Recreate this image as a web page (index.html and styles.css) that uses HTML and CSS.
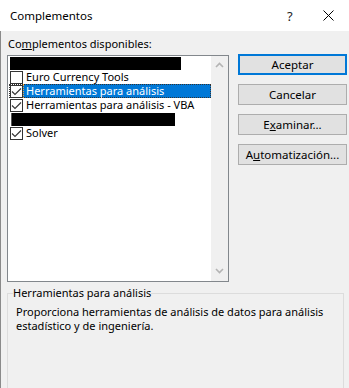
FILE: index.html
```html
<!DOCTYPE html>
<html lang="es">
<head>
    <meta charset="UTF-8">
    <title>Complementos</title>
    <link rel="stylesheet" href="styles.css">
</head>
<body>
    <div class="dialog">
        <div class="titlebar">
            <span class="title">Complementos</span>
            <span class="help">?</span>
            <span class="close">
                <svg width="11" height="11" viewBox="0 0 11 11"><path d="M0.5 0.5 L10.5 10.5 M10.5 0.5 L0.5 10.5" stroke="#000" stroke-width="1" fill="none"/></svg>
            </span>
        </div>

        <div class="content">
            <div class="top">
                <div class="left">
                    <div class="label">Co<u>m</u>plementos disponibles:</div>
                    <div class="listbox">
                        <ul class="items">
                            <li class="row"><span class="redacted bar1"></span></li>
                            <li class="row">
                                <span class="check"></span>
                                <span class="name">Euro Currency Tools</span>
                            </li>
                            <li class="row focus">
                                <span class="check on">
                                    <svg width="11" height="11" viewBox="0 0 11 11"><path d="M1 5.5 L4 8.5 L10 2.5" stroke="#333" stroke-width="1.1" fill="none"/></svg>
                                </span>
                                <span class="name selected">Herramientas para análisis</span>
                            </li>
                            <li class="row">
                                <span class="check on">
                                    <svg width="11" height="11" viewBox="0 0 11 11"><path d="M1 5.5 L4 8.5 L10 2.5" stroke="#333" stroke-width="1.1" fill="none"/></svg>
                                </span>
                                <span class="name">Herramientas para análisis - VBA</span>
                            </li>
                            <li class="row"><span class="redacted bar2"></span></li>
                            <li class="row">
                                <span class="check on">
                                    <svg width="11" height="11" viewBox="0 0 11 11"><path d="M1 5.5 L4 8.5 L10 2.5" stroke="#333" stroke-width="1.1" fill="none"/></svg>
                                </span>
                                <span class="name">Solver</span>
                            </li>
                        </ul>
                        <div class="scrollbar">
                            <svg width="9" height="6" viewBox="0 0 9 6"><path d="M1 5 L4.5 1.5 L8 5" stroke="#b4b4b4" stroke-width="1.6" fill="none"/></svg>
                            <svg width="9" height="6" viewBox="0 0 9 6"><path d="M1 1 L4.5 4.5 L8 1" stroke="#b4b4b4" stroke-width="1.6" fill="none"/></svg>
                        </div>
                    </div>
                </div>

                <div class="buttons">
                    <button class="btn default">Aceptar</button>
                    <button class="btn">Cancelar</button>
                    <button class="btn">E<u>x</u>aminar...</button>
                    <button class="btn">A<u>u</u>tomatización...</button>
                </div>
            </div>

            <fieldset class="group">
                <legend>Herramientas para análisis</legend>
                <p class="desc">Proporciona herramientas de análisis de datos para análisis estadístico y de ingeniería.</p>
            </fieldset>
        </div>
    </div>
</body>
</html>
```

FILE: styles.css
```css
* {
    margin: 0;
    padding: 0;
    box-sizing: border-box;
}

body {
    width: 349px;
    height: 388px;
    overflow: hidden;
    background: #f0f0f0;
    font-family: 'Noto Sans', 'Open Sans', sans-serif;
    font-size: 11px;
    color: #000;
}

.dialog {
    height: 388px;
    display: flex;
    flex-direction: column;
}

/* 标题栏 */
.titlebar {
    flex-shrink: 0;
    height: 31px;
    background: #fff;
    display: flex;
    align-items: center;
}

.title {
    flex: 1;
    padding-left: 10px;
    font-size: 11.5px;
}

.help {
    width: 20px;
    margin-right: 16px;
    font-size: 13px;
    color: #222;
}

.close {
    width: 26px;
    display: flex;
    align-items: center;
}

.content {
    flex: 1;
    min-height: 0;
    overflow: hidden;
    border-left: 1px solid #8a8a8a;
    padding: 6px 0 0 6px;
}

.top {
    display: flex;
}

.label {
    height: 14px;
    line-height: 14px;
    margin-left: 1px;
    margin-bottom: 4px;
}

/* 列表框 */
.listbox {
    width: 222px;
    height: 227px;
    border: 1px solid #82878c;
    background: #fff;
    display: flex;
}

.items {
    list-style: none;
    flex: 1;
}

.row {
    height: 14px;
    display: flex;
    align-items: center;
    padding-left: 2px;
}

.row.focus {
    outline: 1px dotted #333;
    outline-offset: -1px;
    margin-left: 1px;
    padding-left: 1px;
}

.check {
    width: 13px;
    height: 13px;
    border: 1px solid #333;
    background: #fff;
    display: flex;
    align-items: center;
    justify-content: center;
}

.name {
    flex: 1;
    height: 14px;
    line-height: 14px;
    padding-left: 3px;
    white-space: nowrap;
}

.name.selected {
    background: #0078d7;
    color: #fff;
    border: 1px dotted #f2a640;
    line-height: 12px;
    padding-left: 2px;
}

.redacted {
    height: 13px;
    background: #000;
}

.bar1 {
    width: 171px;
}

.bar2 {
    width: 164px;
    margin-left: 1px;
    border-left: 1px solid #555;
}

.scrollbar {
    width: 17px;
    background: #f0f0f0;
    display: flex;
    flex-direction: column;
    justify-content: space-between;
    align-items: center;
    padding: 6px 0 7px;
}

/* 按钮 */
.buttons {
    margin-left: 9px;
    margin-top: 17px;
    width: 109px;
    display: flex;
    flex-direction: column;
    gap: 9px;
}

.btn {
    height: 21px;
    background: #e1e1e1;
    border: 1px solid #adadad;
    font-family: inherit;
    font-size: 11.5px;
    color: #000;
}

.btn.default {
    border: 2px solid #0078d7;
}

/* 说明分组 */
.group {
    margin-top: 4px;
    width: 337px;
    height: 120px;
    border: 1px solid #dcdcdc;
    padding: 0 8px 0 8px;
}

.group legend {
    padding: 0;
    margin-left: -3px;
    line-height: 14px;
}

.desc {
    margin-top: 5px;
    line-height: 14px;
}
```
